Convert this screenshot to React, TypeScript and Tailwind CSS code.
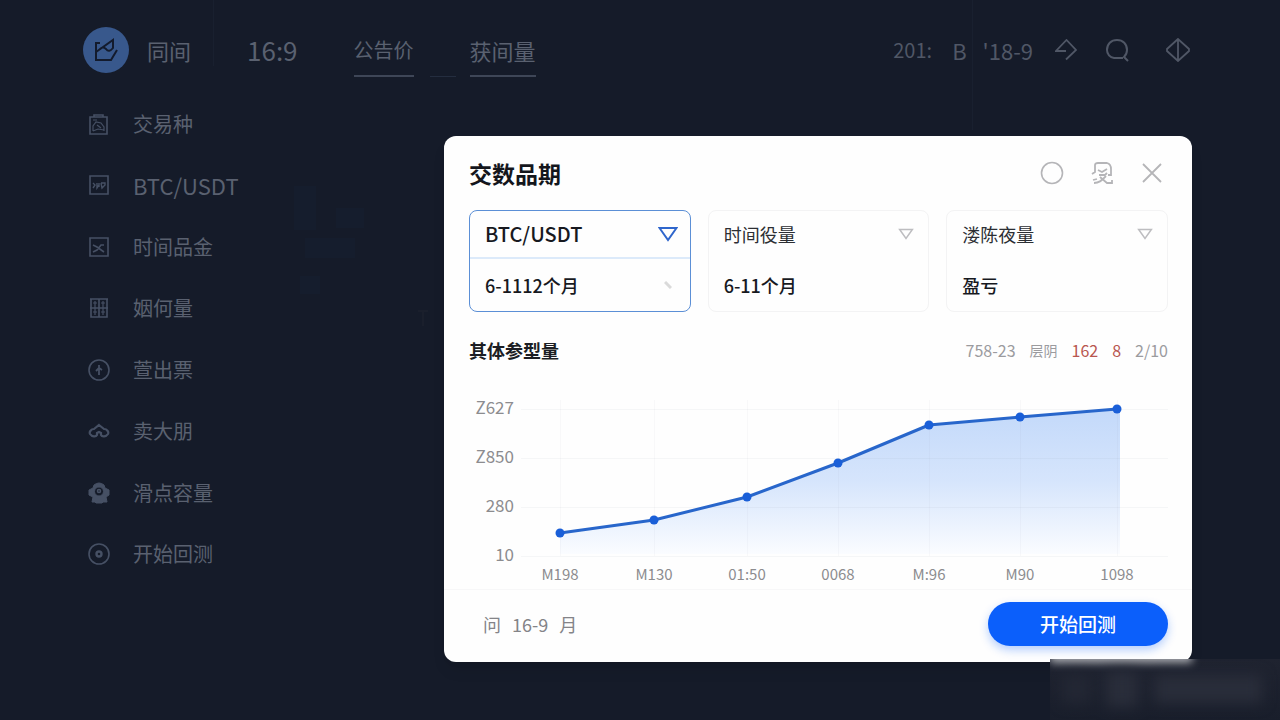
import { ReactNode } from "react";

const navItems: { label: string; icon: ReactNode }[] = [
  {
    label: "交易种",
    icon: (
      <>
        <path d="M2 4h17v17H2zM6 4V2h9v2" />
        <path d="M5 18v-5l3-4 5 1 3 4v4M5 18l5-2 6 1M9 12l4 3M5 7h4" strokeWidth="1.2" />
      </>
    ),
  },
  {
    label: "BTC/USDT",
    icon: (
      <>
        <path d="M2 2h18v18H2z" />
        <path d="M5 9l2 2-2 3M9 9v5l2-3M11 9v4M13 9h4v2l-3 3-1-5" strokeWidth="1.4" />
      </>
    ),
  },
  {
    label: "时间品金",
    icon: (
      <>
        <path d="M2 2h18v18H2z" />
        <path d="M5 9l4 2 7 5M16 9h-3l-4 5-4 2" />
      </>
    ),
  },
  {
    label: "姻何量",
    icon: (
      <>
        <path d="M2 2h18M3 2v18h16V2M11 2v18M2 11h18" />
        <path d="M7 4v14M15 4v14M5 6h4M13 6h4M5 15h4M13 15h4" strokeWidth="1.2" />
      </>
    ),
  },
  {
    label: "萱出票",
    icon: (
      <>
        <circle cx="11" cy="11" r="10" />
        <path d="M11 6v10M8 12l3-3 3 2" strokeWidth="1.8" />
      </>
    ),
  },
  {
    label: "卖大朋",
    icon: (
      <path
        d="M11 5l5 4c3 0 5 3 4 5-2 3-6 3-7 1v-2l-2-1-2 1v2c-1 2-5 2-7-1-1-2 1-5 4-5z"
        strokeWidth="2.2"
      />
    ),
  },
  {
    label: "滑点容量",
    icon: (
      <>
        <path
          d="M6 3q5-4 10 0l1 3 4 2v5l-3 2 1 5h-4l-1 1H8l-1-1H4l1-5-4-2V8l4-2zM11 5a4.500 4.500 0 1 0 0 9 4.500 4.500 0 0 0 0-9z"
          fill="currentColor"
          fillRule="evenodd"
          strokeWidth="1"
        />
        <circle cx="11" cy="9" r="1.500" />
      </>
    ),
  },
  {
    label: "开始回测",
    icon: (
      <>
        <circle cx="11" cy="11" r="10" />
        <circle cx="11" cy="11" r="2.500" strokeWidth="2.4" />
      </>
    ),
  },
];

const fields = [
  { name: "BTC/USDT", value: "6-1112个月", active: true },
  { name: "时间役量", value: "6-11个月", active: false },
  { name: "溇陈夜量", value: "盈亏", active: false },
];

const points = [
  { x: 91, y: 147, label: "M198" },
  { x: 185, y: 134, label: "M130" },
  { x: 278, y: 111, label: "01:50" },
  { x: 369, y: 77, label: "0068" },
  { x: 460, y: 39, label: "M:96" },
  { x: 551, y: 31, label: "M90" },
  { x: 648, y: 23, label: "1098" },
];

const yTicks = [
  { y: 23, label: "Z627" },
  { y: 72, label: "Z850" },
  { y: 121, label: "280" },
  { y: 170, label: "10" },
];

function Header() {
  return (
    <header className="flex items-center pt-[27px] pr-[90px] pb-5 pl-[83px]">
      <div className="flex h-[46px] w-[46px] items-center justify-center rounded-full bg-[#38588c]">
        <svg
          viewBox="0 0 26 26"
          className="h-[26px] w-[26px] text-[#131b2d]"
          fill="none"
          stroke="currentColor"
          strokeWidth="2"
        >
          <path d="M7 6H3v17h15l6-10M3 15L20 3v8q-4 5-7 1-3-3-6 0" />
        </svg>
      </div>
      <div className="ml-[18px] text-[22px] leading-[30px]">同间</div>
      <div className="ml-14 text-[26px] leading-[30px]">16:9</div>
      <nav className="ml-14 flex items-center">
        <a
          href="#price"
          className="relative text-[20px] leading-[30px] after:absolute after:inset-x-0 after:-bottom-3 after:h-0.5 after:bg-[#3e4657]"
        >
          公告价
        </a>
        <a
          href="#volume"
          className="relative ml-14 text-[22px] leading-[30px] after:absolute after:inset-x-0 after:-bottom-3 after:h-0.5 after:bg-[#3e4657]"
        >
          获间量
        </a>
      </nav>
      <div className="ml-auto flex items-center text-[22px] leading-[30px] text-[#505766]">
        <span className="text-[20px]">201:</span>
        <span className="ml-5">B</span>
        <span className="ml-4">'18-9</span>
        <button aria-label="Share" className="ml-[22px]">
          <svg viewBox="0 0 22 22" className="h-[22px] w-[22px]" fill="none" stroke="currentColor" strokeWidth="1.8">
            <path d="M11 12H1L11.500 1 21 11l-10 9.500" />
          </svg>
        </button>
        <button aria-label="Search" className="ml-7">
          <svg viewBox="0 0 24 24" className="h-6 w-6" fill="none" stroke="currentColor" strokeWidth="2">
            <path d="M18 20H9a8 8 0 0 1-7-8c0-6 4-10 10-10s10 4 10 10c0 3-1 5-3 7l4 4" />
          </svg>
        </button>
        <button aria-label="Theme" className="ml-[37px]">
          <svg viewBox="0 0 24 24" className="h-6 w-6" fill="none" stroke="currentColor" strokeWidth="1.8">
            <path d="M12 1L1 11v2l11 10 11-10v-2zM12 1v22" />
          </svg>
        </button>
      </div>
    </header>
  );
}

function Sidebar() {
  return (
    <nav className="grid flex-1 auto-rows-fr pb-[135px] pl-[88px]">
      {navItems.map((item) => (
        <a
          key={item.label}
          href="#"
          className={`flex items-center gap-[23px] ${item.label === "BTC/USDT" ? "text-[22px]" : "text-[20px]"}`}
        >
          <svg
            viewBox="0 0 22 22"
            className="h-[22px] w-[22px] text-[#465064]"
            fill="none"
            stroke="currentColor"
            strokeWidth="1.6"
          >
            {item.icon}
          </svg>
          {item.label}
        </a>
      ))}
    </nav>
  );
}

function Field({ name, value, active }: { name: string; value: string; active: boolean }) {
  return (
    <div className={`rounded-lg border ${active ? "border-[#5b8fd6]" : "border-[#f3f3f4]"}`}>
      <div
        className={`flex h-12 items-center border-b-2 pr-3 pl-[15px] ${
          active ? "border-[#dceafa]" : "border-transparent"
        }`}
      >
        <select
          aria-label={name}
          className={`min-w-0 flex-1 appearance-none bg-transparent ${
            active ? "text-[20px] font-medium text-[#17191f]" : "text-lg text-[#2c2e33]"
          }`}
        >
          <option>{name}</option>
        </select>
        <svg
          viewBox="0 0 20 16"
          className={active ? "h-4 w-5 text-[#2f66cc]" : "mr-0.5 h-3 w-4 text-[#bdbdc0]"}
          fill="none"
          stroke="currentColor"
          strokeWidth="2"
        >
          <path d="M1.500 2h17L10 14z" />
        </svg>
      </div>
      <div className="flex h-[52px] items-center justify-between pr-[18px] pl-[15px] text-lg font-medium text-[#17191f]">
        {value}
        {active && (
          <svg viewBox="0 0 8 8" className="h-2 w-2 text-[#dadada]" stroke="currentColor" strokeWidth="3">
            <path d="M1 1l6 6" />
          </svg>
        )}
      </div>
    </div>
  );
}

function Chart() {
  const line = points.map((p) => `${p.x},${p.y}`).join(" ");

  return (
    <svg viewBox="0 0 699 203" className="block w-full">
      <defs>
        <linearGradient id="area" x1="0" y1="0" x2="0" y2="1">
          <stop offset="0" stopColor="#c3d9fa" />
          <stop offset="0.5" stopColor="#d6e5fc" />
          <stop offset="1" stopColor="#fafcff" />
        </linearGradient>
      </defs>
      <polygon points={`91,168 ${line} 651,23 651,168`} fill="url(#area)" />
      {yTicks.map((t) => (
        <g key={t.label}>
          <path d={`M52 ${t.y + 0.5}H699`} stroke="#8090a0" strokeOpacity="0.07" />
          <text x="45" y={t.y + 5} textAnchor="end" fontSize="17" fill="#8c8c8f">
            {t.label}
          </text>
        </g>
      ))}
      {points.map((p) => (
        <g key={p.label}>
          <path d={`M${p.x + 0.5} 14V170`} stroke="#8090a0" strokeOpacity="0.05" />
          <text x={p.x} y="194" textAnchor="middle" fontSize="15" fill="#8c8c8f">
            {p.label}
          </text>
        </g>
      ))}
      <polyline points={line} fill="none" stroke="#2866cb" strokeWidth="3" strokeLinejoin="round" />
      {points.map((p) => (
        <circle key={p.label} cx={p.x} cy={p.y} r="4.500" fill="#1a5fd8" />
      ))}
    </svg>
  );
}

function BacktestModal() {
  return (
    <div className="absolute inset-x-0 top-[136px] pr-[88px] pl-[444px]">
      <section role="dialog" aria-labelledby="title" className="rounded-xl bg-[#fefefe] shadow-lg">
        <div className="pt-[21px] pr-6 pl-[25px]">
          <div className="flex items-center">
            <h2 id="title" className="flex-1 text-[23px] leading-8 font-bold text-[#14161c]">
              交数品期
            </h2>
            <div className="flex items-center gap-[26px] pr-1 text-[#b5b5b8]">
              <button aria-label="Status">
                <svg viewBox="0 0 24 24" className="h-6 w-6" fill="none" stroke="currentColor" strokeWidth="1.6">
                  <circle cx="12" cy="12" r="10.500" />
                </svg>
              </button>
              <button aria-label="Profile">
                <svg viewBox="0 0 24 24" className="h-6 w-6" fill="none" stroke="currentColor" strokeWidth="1.8">
                  <path d="M2 13l3-2V4q0-2 3-2h9q4 1 4 6v6h-3M8 9l4 2 5-3M9 14h6l2-2M3 19l4-1M4 22c5 0 7-2 12-7M10 16l7 6h5v-3" />
                </svg>
              </button>
              <button aria-label="Close">
                <svg viewBox="0 0 24 24" className="h-6 w-6" fill="none" stroke="currentColor" strokeWidth="1.8">
                  <path d="M3 3l18 18M21 3L3 21" />
                </svg>
              </button>
            </div>
          </div>
          <div className="mt-[21px] grid grid-cols-3 gap-[17px]">
            {fields.map((f) => (
              <Field key={f.name} {...f} />
            ))}
          </div>
          <div className="mt-6 flex items-center">
            <h3 className="flex-1 text-lg leading-7 font-bold text-[#1c1e24]">其体参型量</h3>
            <div className="flex items-center gap-[14px] text-base text-[#9b9b9e]">
              <span>758-23</span>
              <span className="text-sm">层阴</span>
              <span className="text-[#b8564f]">162</span>
              <span className="text-[#b8564f]">8</span>
              <span>2/10</span>
            </div>
          </div>
          <div className="mt-[22px]">
            <Chart />
          </div>
        </div>
        <footer className="flex items-center justify-between border-t border-[#f7f7f8] pt-3 pr-6 pb-4 pl-[25px]">
          <div className="flex gap-[11px] px-[14px] text-lg text-[#848488]">
            <span>问</span>
            <span>16-9</span>
            <span>月</span>
          </div>
          <button className="h-11 w-[180px] rounded-full bg-[#0b5ffb] text-[19px] font-medium text-white shadow-[0_4px_10px_rgba(11,95,251,0.3)]">
            开始回测
          </button>
        </footer>
      </section>
    </div>
  );
}

function Ghosts() {
  return (
    <svg className="absolute inset-0 h-full w-full" fill="#1a2740" fillOpacity="0.2" aria-hidden="true">
      <path d="M294 186h22v44h-22zM305 238h50v20h-50zM300 276h20v18h-20zM336 208h28v20h-28z" />
      <path d="M213 0h1v66h-1zM972 0h1v130h-1z" fill="#2b3549" />
      <path d="M430 76h26v1h-26z" fill="#2b3549" fillOpacity="0.7" />
      <path d="M418 310h10v2h-4v14h-2v-14h-4z" fill="#33333a" />
    </svg>
  );
}

function Watermark() {
  return (
    <div className="absolute right-0 bottom-0 h-[61px] w-[230px] overflow-hidden bg-linear-to-b from-[#1f2330] to-[#191e2b]">
      <div className="-mt-3 h-4 w-[142px] bg-[#a9abb0] blur-[4px]" />
      <div className="flex items-center gap-4 pt-2 pl-3 blur-[7px]">
        <div className="h-7 w-7 bg-[#232734]" />
        <div className="h-9 w-8 bg-[#292d3a]" />
        <div className="h-7 w-[108px] bg-[#292d3a]" />
      </div>
    </div>
  );
}

export default function App() {
  return (
    <div className="relative flex min-h-screen flex-col bg-[#151b29] font-['Noto_Sans_CJK_SC',sans-serif] text-[#5a6170]">
      <Ghosts />
      <Header />
      <Sidebar />
      <BacktestModal />
      <Watermark />
    </div>
  );
}
